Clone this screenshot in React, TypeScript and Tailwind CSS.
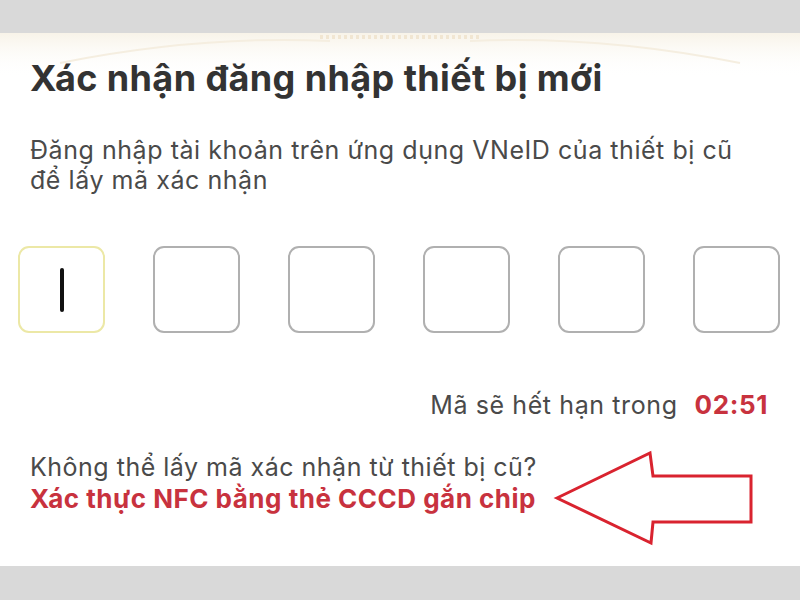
import React from "react";

function Box({ active }: { active?: boolean }) {
  return (
    <div
      className={
        "w-[87px] h-[87px] rounded-[11px] border-2 flex items-center justify-center bg-white " +
        (active ? "border-[#ece8a6]" : "border-[#b0b0b0]")
      }
    >
      {active ? <div className="w-[4px] h-[44px] rounded-full bg-[#111]" /> : null}
    </div>
  );
}

export default function App() {
  return (
    <div
      className="w-[800px] h-[600px] bg-[#d9d9d9] flex flex-col overflow-hidden relative"
      style={{ fontFamily: "Inter, 'Noto Sans', sans-serif" }}
    >
      <div className="h-[33px] shrink-0" />
      <div className="flex-1 bg-white flex flex-col relative">
        <svg className="absolute left-0 top-0" width="800" height="45" viewBox="0 0 800 45">
          <defs>
            <linearGradient id="fade" x1="0" y1="0" x2="0" y2="1">
              <stop offset="0" stopColor="#f7f2e6" stopOpacity="0.9" />
              <stop offset="1" stopColor="#ffffff" stopOpacity="0" />
            </linearGradient>
          </defs>
          <rect x="0" y="0" width="800" height="45" fill="url(#fade)" />
          <path d="M60 30 Q200 2 330 8" stroke="#f5eee0" strokeWidth="2" fill="none" />
          <path d="M470 8 Q600 2 740 30" stroke="#f5eee0" strokeWidth="2" fill="none" />
          <path d="M320 4 L480 4" stroke="#f1e6d2" strokeWidth="4" strokeDasharray="3 3" fill="none" />
        </svg>
        <div className="relative px-[30px] pt-[23px]">
          <h1 className="text-[36px] leading-[44px] font-bold text-[#333333] tracking-[0.4px]">
            Xác nhận đăng nhập thiết bị mới
          </h1>
          <p className="mt-[35px] text-[25px] leading-[30px] text-[#4a4a4a] tracking-[0.55px]">
            Đăng nhập tài khoản trên ứng dụng VNeID của thiết bị cũ
            <br />
            để lấy mã xác nhận
          </p>
        </div>
        <div className="relative px-[18px] mt-[51px] flex justify-between w-[798px]">
          <Box active />
          <Box />
          <Box />
          <Box />
          <Box />
          <Box />
        </div>
        <div className="flex justify-end items-baseline pr-[32px] mt-[56px] text-[25px] leading-[32px]">
          <span className="text-[#4a4a4a] tracking-[0.6px]">Mã sẽ hết hạn trong</span>
          <span className="ml-[17px] text-[26px] font-bold text-[#c8323e] tracking-[0.6px]">02:51</span>
        </div>
        <div className="px-[30px] mt-[30px] text-[25px] leading-[32px]">
          <p className="text-[#4a4a4a] tracking-[0.5px]">Không thể lấy mã xác nhận từ thiết bị cũ?</p>
          <p className="text-[26px] font-bold text-[#c8323e] tracking-[0.5px]">Xác thực NFC bằng thẻ CCCD gắn chip</p>
        </div>
        <svg
          className="absolute left-0 top-0"
          width="800"
          height="533"
          viewBox="0 33 800 533"
        >
          <polygon
            points="557,498 650,453 653,476 751,476 751,522 653,522 651,543"
            fill="none"
            stroke="#d9232f"
            strokeWidth="3"
            strokeLinejoin="miter"
          />
        </svg>
      </div>
      <div className="h-[34px] shrink-0" />
    </div>
  );
}
